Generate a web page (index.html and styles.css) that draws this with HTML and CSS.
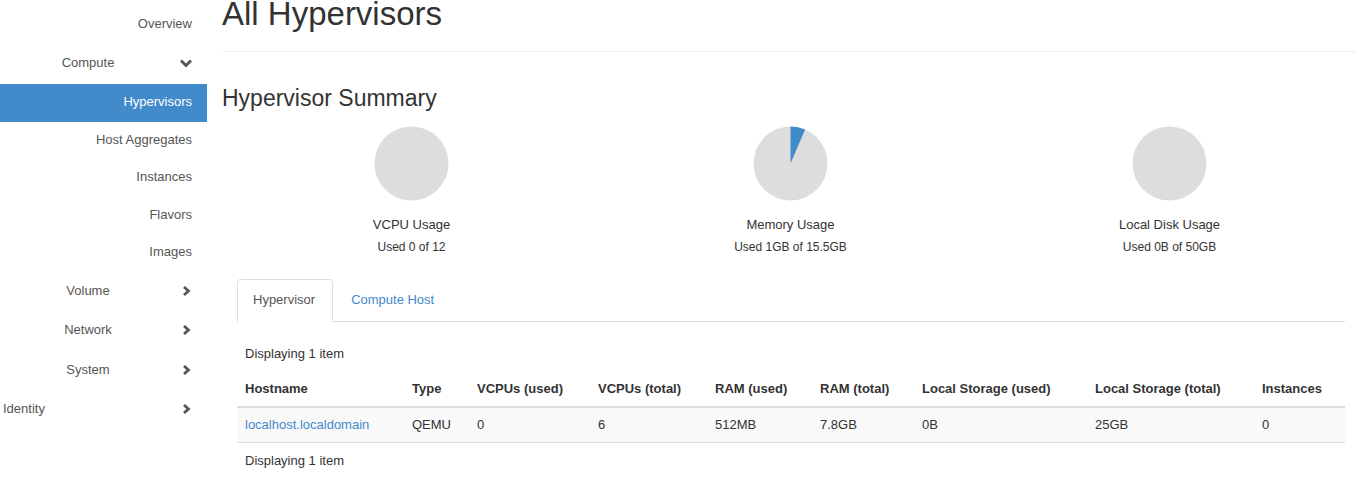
FILE: index.html
```html
<!DOCTYPE html>
<html>
<head>
<meta charset="utf-8">
<link rel="stylesheet" href="styles.css">
</head>
<body>
<div class="layout">
  <nav class="sidebar">
    <div class="sub">Overview</div>
    <div class="cat"><span class="cat-label">Compute</span><span class="chev"><svg width="14" height="10" viewBox="0 0 14 10"><polyline points="2,2.5 7,7.5 12,2.5" fill="none" stroke="#555" stroke-width="2.8"/></svg></span></div>
    <div class="submenu">
      <div class="sub active">Hypervisors</div>
      <div class="sub">Host Aggregates</div>
      <div class="sub">Instances</div>
      <div class="sub">Flavors</div>
      <div class="sub">Images</div>
    </div>
    <div class="cat"><span class="cat-label">Volume</span><span class="chev"><svg width="10" height="12" viewBox="0 0 10 12"><polyline points="3,2 7.5,6 3,10" fill="none" stroke="#555" stroke-width="2.8"/></svg></span></div>
    <div class="cat"><span class="cat-label">Network</span><span class="chev"><svg width="10" height="12" viewBox="0 0 10 12"><polyline points="3,2 7.5,6 3,10" fill="none" stroke="#555" stroke-width="2.8"/></svg></span></div>
    <div class="cat"><span class="cat-label">System</span><span class="chev"><svg width="10" height="12" viewBox="0 0 10 12"><polyline points="3,2 7.5,6 3,10" fill="none" stroke="#555" stroke-width="2.8"/></svg></span></div>
    <div class="cat dash"><span class="cat-label">Identity</span><span class="chev"><svg width="10" height="12" viewBox="0 0 10 12"><polyline points="3,2 7.5,6 3,10" fill="none" stroke="#555" stroke-width="2.8"/></svg></span></div>
  </nav>
  <main class="main">
    <div class="page-header"><h1>All Hypervisors</h1></div>
    <h3 class="summary-title">Hypervisor Summary</h3>
    <div class="pies">
      <div class="pie">
        <svg width="75" height="75" viewBox="0 0 75 75"><circle cx="37.5" cy="37.5" r="37" fill="#dddddd"/></svg>
        <div class="pie-title">VCPU Usage</div>
        <div class="pie-sub">Used 0 of 12</div>
      </div>
      <div class="pie">
        <svg width="75" height="75" viewBox="0 0 75 75"><circle cx="37.5" cy="37.5" r="37" fill="#dddddd"/><path d="M37.5 37.5 L37.5 0.5 A37 37 0 0 1 52.08 3.5 Z" fill="#428bca"/></svg>
        <div class="pie-title">Memory Usage</div>
        <div class="pie-sub">Used 1GB of 15.5GB</div>
      </div>
      <div class="pie">
        <svg width="75" height="75" viewBox="0 0 75 75"><circle cx="37.5" cy="37.5" r="37" fill="#dddddd"/></svg>
        <div class="pie-title">Local Disk Usage</div>
        <div class="pie-sub">Used 0B of 50GB</div>
      </div>
    </div>
    <div class="tabwrap">
      <ul class="tabs">
        <li class="tab active">Hypervisor</li>
        <li class="tab"><a href="#">Compute Host</a></li>
      </ul>
      <table class="tbl">
        <colgroup>
          <col class="c1"><col class="c2"><col class="c3"><col class="c4"><col class="c5"><col class="c6"><col class="c7"><col class="c8"><col class="c9">
        </colgroup>
        <thead>
          <tr class="caption"><td colspan="9">Displaying 1 item</td></tr>
          <tr class="head">
            <th>Hostname</th><th>Type</th><th>VCPUs (used)</th><th>VCPUs (total)</th><th>RAM (used)</th><th>RAM (total)</th><th>Local Storage (used)</th><th>Local Storage (total)</th><th>Instances</th>
          </tr>
        </thead>
        <tbody>
          <tr class="row">
            <td><a href="#">localhost.localdomain</a></td><td>QEMU</td><td>0</td><td>6</td><td>512MB</td><td>7.8GB</td><td>0B</td><td>25GB</td><td>0</td>
          </tr>
        </tbody>
        <tfoot>
          <tr class="caption foot"><td colspan="9">Displaying 1 item</td></tr>
        </tfoot>
      </table>
    </div>
  </main>
</div>
</body>
</html>
```

FILE: styles.css
```css
html, body {
  margin: 0;
  padding: 0;
  background: #fff;
  overflow: hidden;
}
body {
  font-family: "Liberation Sans", Arial, sans-serif;
  font-size: 13px;
  color: #333;
  line-height: 18px;
}
a {
  color: #428bca;
  text-decoration: none;
}
.layout {
  display: flex;
  align-items: flex-start;
}
.sidebar {
  width: 207px;
  flex: none;
  padding-top: 6px;
  color: #555;
}
.sub {
  text-align: right;
  padding: 9px 15px 10.5px;
  line-height: 18px;
}
.sub.active {
  background: #428bca;
  color: #fff;
}
.submenu {
  margin-top: 1px;
}
.cat {
  display: flex;
  align-items: center;
  padding: 10px 0 11.5px;
  line-height: 18px;
}
.cat-label {
  width: 176px;
  text-align: center;
}
.dash .cat-label {
  text-align: left;
  padding-left: 3px;
  width: 173px;
}
.chev {
  width: 20px;
  display: flex;
  justify-content: center;
  align-items: center;
  height: 18px;
}
.main {
  flex: 1;
  padding-left: 15px;
  min-width: 0;
}
.page-header {
  margin-top: -4px;
  padding-bottom: 19px;
  border-bottom: 1px solid #eeeeee;
}
.page-header h1 {
  margin: 0;
  font-size: 33px;
  line-height: 36px;
  font-weight: normal;
  color: #333;
}
.summary-title {
  margin: 33px 0 0;
  font-size: 23px;
  line-height: 26px;
  font-weight: normal;
  color: #333;
}
.pies {
  display: grid;
  grid-template-columns: repeat(3, 1fr);
  margin: 15px -3px 0 0;
}
.pie {
  display: flex;
  flex-direction: column;
  align-items: center;
}
.pie svg {
  display: block;
}
.pie-title {
  margin-top: 15px;
  line-height: 18px;
}
.pie-sub {
  margin-top: 5px;
  font-size: 12px;
  line-height: 16px;
}
.tabwrap {
  margin: 24px 11px 0 15px;
}
.tabs {
  list-style: none;
  margin: 0;
  padding: 0;
  display: flex;
  border-bottom: 1px solid #dddddd;
}
.tab {
  margin-right: 2px;
  margin-bottom: -1px;
  padding: 10px 17px 12px 15px;
  line-height: 19px;
  border: 1px solid transparent;
  border-radius: 4px 4px 0 0;
}
.tab.active {
  color: #555;
  border-color: #dddddd;
  border-bottom-color: #fff;
  background: #fff;
}
.tbl {
  width: 100%;
  table-layout: fixed;
  border-collapse: collapse;
  margin-top: 15px;
}
.c1 { width: 167px; }
.c2 { width: 65px; }
.c3 { width: 121px; }
.c4 { width: 117px; }
.c5 { width: 105px; }
.c6 { width: 102px; }
.c7 { width: 173px; }
.c8 { width: 167px; }
.c9 { width: 91px; }
.tbl td, .tbl th {
  padding: 8px;
  text-align: left;
  line-height: 18px;
  white-space: nowrap;
}
.head th {
  padding-top: 9px;
  font-weight: bold;
  border-bottom: 2px solid #dddddd;
}
.row td {
  background: #f9f9f9;
  border-bottom: 1px solid #dddddd;
}
.foot td {
  padding-top: 9px;
}
```
